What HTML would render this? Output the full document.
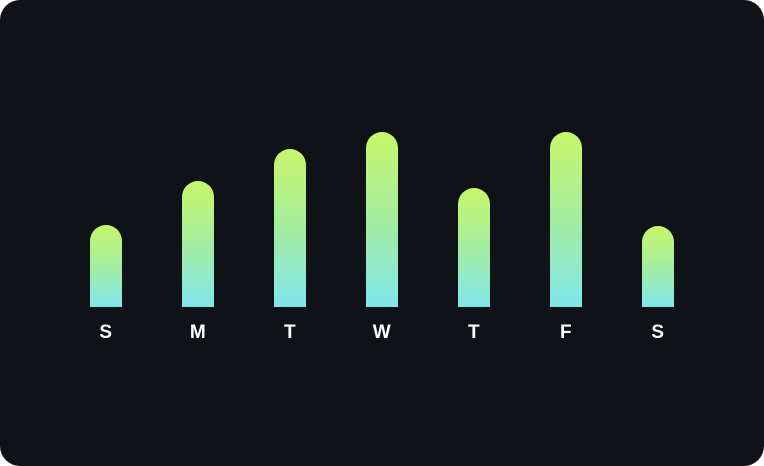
<!DOCTYPE html><html><head><style>
html,body{margin:0;background:#fff;width:764px;height:466px;overflow:hidden}
.c{position:absolute;left:0;top:0;width:764px;height:466px;background:#0f1216;border-radius:20px}
.b{position:absolute;width:32px;bottom:159px;border-radius:16px 16px 0 0;background:linear-gradient(#c8f66a,#a4eda0 50%,#80e6ec)}
.l{position:absolute;top:322px;width:40px;text-align:center;color:#fff;font:bold 19px "Liberation Sans",sans-serif;letter-spacing:0.5px}
</style></head><body><div class="c">
<div class="b" style="left:90px;top:225px"></div>
<div class="b" style="left:182px;top:181px"></div>
<div class="b" style="left:274px;top:149px"></div>
<div class="b" style="left:366px;top:132px"></div>
<div class="b" style="left:458px;top:188px"></div>
<div class="b" style="left:550px;top:132px"></div>
<div class="b" style="left:642px;top:226px"></div>
<div class="l" style="left:86px">S</div>
<div class="l" style="left:178px">M</div>
<div class="l" style="left:270px">T</div>
<div class="l" style="left:362px">W</div>
<div class="l" style="left:454px">T</div>
<div class="l" style="left:546px">F</div>
<div class="l" style="left:638px">S</div>
</div></body></html>
